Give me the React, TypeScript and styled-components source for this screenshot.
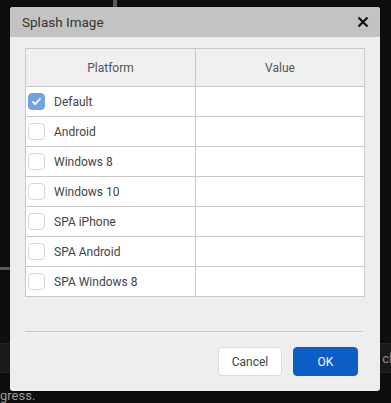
import styled, { createGlobalStyle } from "styled-components";
import { useState } from "react";

const GlobalStyle = createGlobalStyle`
  html, body {
    margin: 0;
    padding: 0;
    background: #0e0e0e;
    font-family: Roboto, "Liberation Sans", sans-serif;
  }
`;

const Screen = styled.div`
  position: relative;
  width: 391px;
  height: 403px;
  overflow: hidden;
  background: #0e0e0e;
  display: flex;
  flex-direction: column;
`;

const TopStrip = styled.div`
  height: 7px;
  display: flex;
  padding-left: 113px;
`;

const ScrollThumb = styled.div`
  width: 4px;
  background: #5a5a5a;
`;

const Spacer = styled.div<{ $h: number }>`
  height: ${(p) => p.$h}px;
`;

const Rule = styled.div`
  height: 3px;
  width: 20px;
  background: #56595b;
`;

const Toolbar = styled.div`
  height: 28px;
  background: #1a1a1a;
  border-top: 1px solid #222;
  border-bottom: 1px solid #222;
  display: flex;
  justify-content: flex-end;
  align-items: center;
  color: #8a8a8a;
  font-size: 13px;
  white-space: nowrap;
`;

const ToolbarText = styled.span`
  margin-right: -8px;
`;

const Footnote = styled.div`
  color: #9a9a9a;
  font-size: 13px;
  padding-top: 15px;
  margin-left: 0;
`;

const Dialog = styled.div`
  position: absolute;
  left: 10px;
  top: 7px;
  width: 370px;
  height: 384px;
  background: #eeeeee;
  border-radius: 3px;
  overflow: hidden;
  display: flex;
  flex-direction: column;
  box-shadow: 0 0 2px rgba(0, 0, 0, 0.4);
`;

const TitleBar = styled.div`
  height: 30px;
  background: #c3c3c3;
  display: flex;
  align-items: center;
  justify-content: space-between;
  padding: 0 11px 0 12px;
  flex-shrink: 0;
`;

const Title = styled.span`
  font-size: 13.5px;
  color: #333;
`;

const Close = styled.button`
  border: none;
  background: none;
  padding: 0;
  width: 12px;
  height: 12px;
  display: flex;
  cursor: pointer;
`;

const Body = styled.div`
  padding: 11px 15px 0 15px;
  flex: 1;
  display: flex;
  flex-direction: column;
`;

const Table = styled.table`
  border-collapse: collapse;
  width: 340px;
  table-layout: fixed;
  font-size: 12px;
`;

const HeadCell = styled.th`
  height: 35px;
  background: #f0f0f0;
  border: 1px solid #c9c9c9;
  color: #555;
  font-weight: normal;
  text-align: center;
`;

const Cell = styled.td`
  height: 29px;
  background: #fff;
  border: 1px solid #c9c9c9;
  padding: 0 0 0 2px;
  color: #444;
`;

const CheckRow = styled.label`
  display: flex;
  align-items: center;
  gap: 9px;
  cursor: pointer;
`;

const Box = styled.span<{ $checked: boolean }>`
  width: 17px;
  height: 17px;
  box-sizing: border-box;
  border-radius: 4px;
  border: 1px solid ${(p) => (p.$checked ? "#72a3e3" : "#d8d8d8")};
  background: ${(p) => (p.$checked ? "#72a3e3" : "#fff")};
  display: flex;
  align-items: center;
  justify-content: center;
`;

const Divider = styled.div`
  margin-top: 34px;
  height: 1px;
  background: #c8c8c8;
  margin-right: 2px;
`;

const Footer = styled.div`
  display: flex;
  justify-content: flex-end;
  gap: 11px;
  padding: 15px 7px 0 0;
`;

const Button = styled.button<{ $primary?: boolean }>`
  height: 29px;
  border-radius: 4px;
  font-family: inherit;
  font-size: 12px;
  cursor: pointer;
  padding: 0;
  width: ${(p) => (p.$primary ? "65px" : "64px")};
  border: 1px solid ${(p) => (p.$primary ? "#0a5ec5" : "#dcdcdc")};
  background: ${(p) => (p.$primary ? "#0a5ec5" : "#fff")};
  color: ${(p) => (p.$primary ? "#fff" : "#444")};
`;

const platforms = [
  "Default",
  "Android",
  "Windows 8",
  "Windows 10",
  "SPA iPhone",
  "SPA Android",
  "SPA Windows 8",
];

function App() {
  const [checked, setChecked] = useState<string[]>(["Default"]);
  const toggle = (name: string) =>
    setChecked((c) => (c.includes(name) ? c.filter((x) => x !== name) : [...c, name]));

  return (
    <>
      <GlobalStyle />
      <Screen>
        <TopStrip>
          <ScrollThumb />
        </TopStrip>
        <Spacer $h={260} />
        <Rule />
        <Spacer $h={73} />
        <Toolbar>
          <ToolbarText>cle</ToolbarText>
        </Toolbar>
        <Footnote>gress.</Footnote>

        <Dialog>
          <TitleBar>
            <Title>Splash Image</Title>
            <Close aria-label="Close">
              <svg width="12" height="12" viewBox="0 0 12 12">
                <path d="M1.5 1.5 L10.5 10.5 M10.5 1.5 L1.5 10.5" stroke="#111" strokeWidth="2.2" />
              </svg>
            </Close>
          </TitleBar>
          <Body>
            <Table>
              <thead>
                <tr>
                  <HeadCell style={{ width: 167 }}>Platform</HeadCell>
                  <HeadCell>Value</HeadCell>
                </tr>
              </thead>
              <tbody>
                {platforms.map((p) => {
                  const on = checked.includes(p);
                  return (
                    <tr key={p}>
                      <Cell>
                        <CheckRow onClick={() => toggle(p)}>
                          <Box $checked={on}>
                            {on && (
                              <svg width="11" height="9" viewBox="0 0 11 9">
                                <path d="M1.5 4.5 L4.2 7 L9.5 1.5" fill="none" stroke="#fff" strokeWidth="1.8" />
                              </svg>
                            )}
                          </Box>
                          {p}
                        </CheckRow>
                      </Cell>
                      <Cell />
                    </tr>
                  );
                })}
              </tbody>
            </Table>
            <Divider />
            <Footer>
              <Button>Cancel</Button>
              <Button $primary>OK</Button>
            </Footer>
          </Body>
        </Dialog>
      </Screen>
    </>
  );
}

export default App;
